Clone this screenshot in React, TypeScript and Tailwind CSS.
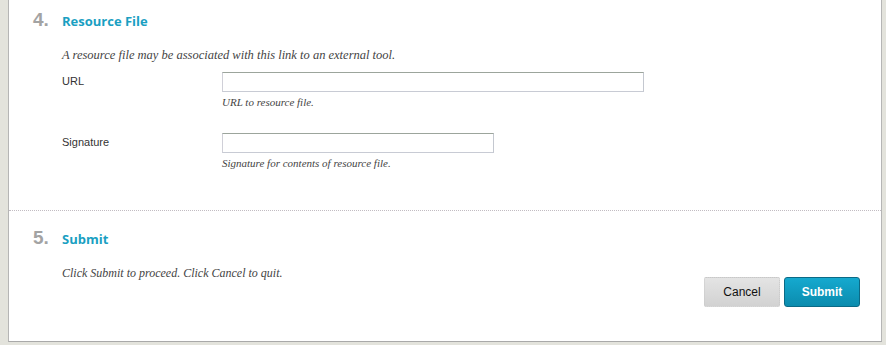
const serif = "font-['Liberation_Serif',Georgia,serif] italic";
const sans = "font-['Liberation_Sans',Arial,sans-serif]";

function StepHeading({ num, title }: { num: string; title: string }) {
  return (
    <div className="flex items-baseline">
      <span className={`${sans} w-[29px] text-[19px] font-bold leading-none text-[#a3a3a3]`}>{num}</span>
      <h2 className="font-['Open_Sans',sans-serif] text-[13px] font-bold leading-none text-[#1a9fc2]">{title}</h2>
    </div>
  );
}

function Field({ label, help, inputWidth }: { label: string; help: string; inputWidth: string }) {
  return (
    <div className="flex">
      <label className={`${sans} w-[160px] shrink-0 pt-[2px] text-[11px] leading-[14px] text-[#333]`}>{label}</label>
      <div>
        <input
          type="text"
          className={`${inputWidth} block h-[20px] border border-t-[#9ca59c] border-r-[#c4c8d0] border-b-[#c8cbd4] border-l-[#d0d0d8] border-b-dotted border-l-dotted bg-white outline-none`}
        />
        <p className={`${serif} mt-[4px] text-[11px] leading-[13px] text-[#444]`}>{help}</p>
      </div>
    </div>
  );
}

export default function App() {
  return (
    <div className="h-[345px] w-[886px] bg-[#e3e3dc] pb-[3px] pl-[8px] pr-[4px]">
      <div className="h-full border-x border-b border-x-[#b5b5b5] border-b-[#a9a9a9] bg-white">
        <section className="h-[211px] border-b border-dotted border-[#c2bcc2] pl-[24px] pt-[10px]">
          <StepHeading num="4." title="Resource File" />
          <div className="pl-[29px]">
            <p className={`${serif} mt-[19px] text-[12.5px] leading-[14px] text-[#444]`}>
              A resource file may be associated with this link to an external tool.
            </p>
            <div className="mt-[10px]">
              <Field label="URL" help="URL to resource file." inputWidth="w-[422px]" />
            </div>
            <div className="mt-[24px]">
              <Field label="Signature" help="Signature for contents of resource file." inputWidth="w-[272px]" />
            </div>
          </div>
        </section>
        <section className="pl-[24px] pr-[21px] pt-[17px]">
          <StepHeading num="5." title="Submit" />
          <div className="pl-[29px]">
            <p className={`${serif} mt-[19px] text-[12px] leading-[14px] text-[#444]`}>
              Click Submit to proceed. Click Cancel to quit.
            </p>
          </div>
          <div className="-mt-[3px] flex justify-end gap-[4px]">
            <button className={`${sans} h-[30px] w-[76px] rounded-[2px] border border-dotted border-[#c8c8c8] bg-gradient-to-b from-[#e4e4e4] to-[#d2d2d2] text-[12px] text-[#111]`}>
              Cancel
            </button>
            <button className={`${sans} h-[30px] w-[76px] rounded-[3px] border border-[#0b6a86] bg-gradient-to-b from-[#15a9cf] to-[#0b8cae] text-[12px] font-bold text-white`}>
              Submit
            </button>
          </div>
        </section>
      </div>
    </div>
  );
}
